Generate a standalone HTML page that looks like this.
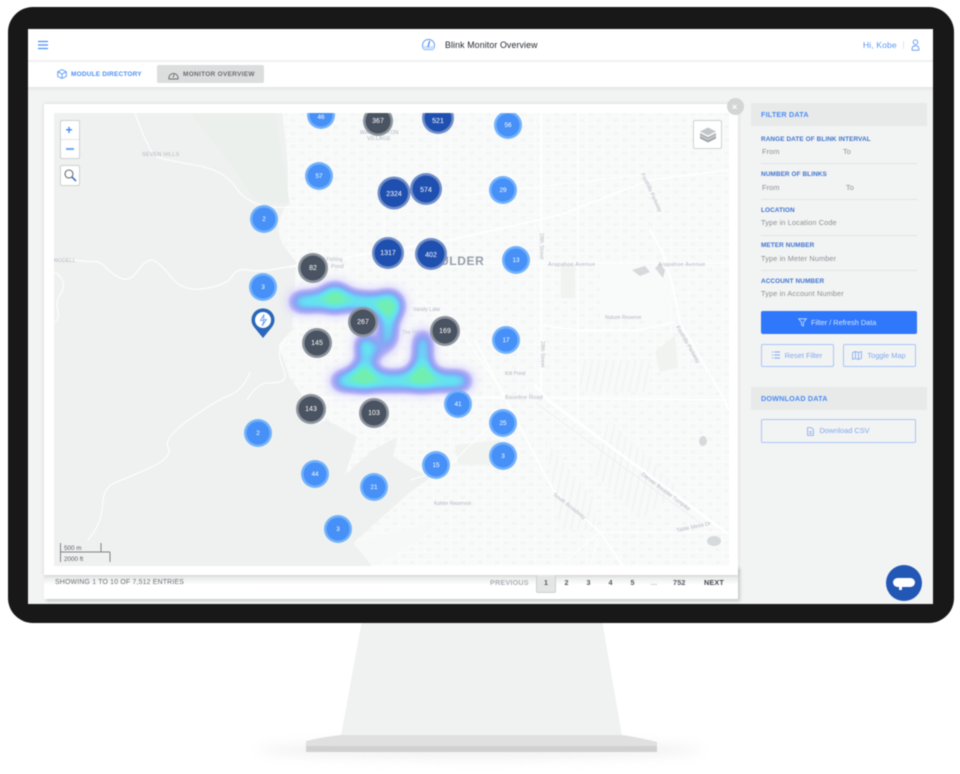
<!DOCTYPE html>
<html lang="en"><head><meta charset="utf-8"><title>Blink Monitor Overview</title>
<style>
html,body{margin:0;padding:0;background:#fff}
body{width:960px;height:774px;position:relative;overflow:hidden;font-family:"Liberation Sans",sans-serif}
.a,.t{position:absolute}
.t{white-space:nowrap;line-height:10px}
#wrap{position:absolute;left:0;top:0;width:960px;height:774px;filter:blur(.45px)}
.lab{font-size:6.4px;font-weight:700;color:#3f74cf;letter-spacing:.1px}
.ph{font-size:7.3px;color:#8b8f93;letter-spacing:.15px}
.div{position:absolute;left:761px;width:156px;height:1px;background:#e2e3e3}
.hd{position:absolute;left:751px;width:176px;height:23px;background:#e8e9e9}
.hd span{position:absolute;left:10px;top:6px;font-size:7.2px;line-height:11px;font-weight:700;color:#4a8df5;letter-spacing:.2px}
.btn{position:absolute;box-sizing:border-box;border:1px solid #a9c6f8;border-radius:2px;color:#80a9ef;font-size:7.4px;text-align:center;line-height:21px}
.pg{font-size:7.2px;font-weight:700;color:#55595f;top:578px;letter-spacing:.2px}
svg text{font-family:"Liberation Sans",sans-serif}
</style></head><body>
<div id="wrap">
<!-- stand -->
<div class="a" style="left:258px;top:742px;width:445px;height:16px;border-radius:50%;background:#e6e6e6;filter:blur(6px);opacity:.6"></div>
<svg class="a" style="left:0;top:0" width="960" height="774" viewBox="0 0 960 774">
<path d="M362,620H602L622,736H341Z" fill="#f0f1f1"/>
<path d="M306,741Q322,737 341,735H622Q642,738 657,742V752H306Z" fill="#e0e0e0"/>
<rect x="306" y="746" width="351" height="6" fill="#d1d1d1"/>
</svg>
<!-- bezel -->
<div class="a" style="left:8px;top:7px;width:946px;height:616px;border-radius:25px;background:#181818"></div>
<!-- screen -->
<div class="a" style="left:28px;top:29px;width:905px;height:575px;background:#f2f3f3;overflow:hidden;border-bottom:0">
<div class="a" style="left:0;top:0;width:905px;height:31px;background:#fff"></div>
<div class="a" style="left:0;top:31px;width:905px;height:2px;background:#f0f1f1"></div>
<div class="a" style="left:0;top:33px;width:905px;height:25px;background:#fff"></div>
<div class="a" style="left:0;top:58px;width:905px;height:4px;background:linear-gradient(#e4e5e5,#f2f3f3)"></div>
</div>
<!-- header -->
<svg class="a" style="left:38px;top:40px" width="10" height="10" viewBox="0 0 10 10"><path d="M0,1.5H10M0,5H10M0,8.5H10" stroke="#4a90f5" stroke-width="1.3"/></svg>
<svg class="a" style="left:421px;top:37px" width="15" height="14" viewBox="0 0 15 14"><path d="M3.2,12.6A6,6 0 1 1 11.8,12.6Z" fill="#fff" stroke="#6aa4f8" stroke-width="1.1"/><path d="M2.5,12.6H12.5L13.2,9H1.8Z" fill="#cfe1fd"/><path d="M7,10L8.6,4" stroke="#3f7fe8" stroke-width="1.2"/></svg>
<div class="t" style="left:445px;top:40px;font-size:8.8px;color:#24282e;letter-spacing:.12px">Blink Monitor Overview</div>
<div class="t" style="left:863px;top:40px;font-size:8.6px;color:#5b97f6;letter-spacing:.1px">Hi, Kobe</div>
<div class="a" style="left:903px;top:41px;width:1px;height:8px;background:#e3e6ea"></div>
<svg class="a" style="left:911px;top:39px" width="9" height="12" viewBox="0 0 9 12"><circle cx="4.5" cy="3.2" r="2.3" fill="none" stroke="#6fa3f6"/><path d="M1,10.5Q1,6.8 4.5,6.8T8,10.5Q8,11.3 7,11.3H2Q1,11.3 1,10.5Z" fill="none" stroke="#6fa3f6"/></svg>
<!-- nav -->
<svg class="a" style="left:57px;top:69px" width="10" height="10" viewBox="0 0 10 10"><path d="M5,.6L9.3,2.8V7.4L5,9.5L.7,7.4V2.8ZM.7,2.8L5,5L9.3,2.8M5,5V9.5" fill="none" stroke="#5b9bf7" stroke-width=".9"/></svg>
<div class="t" style="left:71px;top:69.5px;font-size:6.5px;font-weight:700;color:#4a90f5;letter-spacing:.18px">MODULE DIRECTORY</div>
<div class="a" style="left:157px;top:65px;width:107px;height:18px;background:#dcdddd;border-radius:2px"></div>
<svg class="a" style="left:168px;top:70px" width="11" height="10" viewBox="0 0 11 10"><path d="M1,9A4.6,4.6 0 1 1 10,9Z" fill="none" stroke="#6a6e73" stroke-width=".9"/><path d="M5,7.5L6.5,3.5" stroke="#6a6e73"/></svg>
<div class="t" style="left:183px;top:69.5px;font-size:6.5px;font-weight:700;color:#6a6e73;letter-spacing:.28px">MONITOR OVERVIEW</div>
<!-- card -->
<div class="a" style="left:44px;top:566px;width:694px;height:33px;background:#fff;box-shadow:2px 2px 3px rgba(0,0,0,.18)"></div>
<div class="a" style="left:44px;top:575px;width:694px;height:10px;background:linear-gradient(#e4e5e5,#fff)"></div>
<div class="a" style="left:44px;top:104px;width:694px;height:471px;background:#fff;box-shadow:0 0 4px rgba(0,0,0,.12)"></div>
<!-- map -->
<svg class="a" style="left:54px;top:113px" width="675" height="453" viewBox="54 113 675 453">
<defs>
<pattern id="blk" width="17" height="13" patternUnits="userSpaceOnUse"><rect width="17" height="13" fill="#f8f9f9"/><path d="M0,0H17M0,6.5H17M0,0V13M8.5,0V13" stroke="#fcfcfc" stroke-width="1"/><rect x="2" y="2" width="4" height="3" fill="#f4f5f5"/><rect x="11" y="8.5" width="4" height="3" fill="#f4f5f5"/></pattern>
<pattern id="blk2" width="7" height="40" patternUnits="userSpaceOnUse" patternTransform="rotate(12)"><rect width="7" height="40" fill="#f8f9f9"/><path d="M3.5,0V40" stroke="#f2f3f3" stroke-width="1.4"/></pattern>
<filter id="heat" filterUnits="userSpaceOnUse" x="240" y="250" width="280" height="180" color-interpolation-filters="sRGB">
<feGaussianBlur in="SourceAlpha" stdDeviation="7"/>
<feColorMatrix type="matrix" values="0 0 0 1 0  0 0 0 1 0  0 0 0 1 0  0 0 0 1 0"/>
<feComponentTransfer>
<feFuncR type="table" tableValues=".86 .86 .73 .62 .52 .44 .40 .41 .44 .45 .45"/>
<feFuncG type="table" tableValues=".85 .85 .72 .64 .66 .78 .88 .91 .94 .94 .94"/>
<feFuncB type="table" tableValues=".99 .99 .97 .96 .96 .96 .96 .85 .71 .68 .68"/>
<feFuncA type="table" tableValues="0 .55 1 1 1 1 1 1 1 1 1"/>
</feComponentTransfer>
</filter>
</defs>
<rect x="54" y="113" width="675" height="453" fill="#f8f9f9"/>
<rect x="285" y="113" width="444" height="453" fill="url(#blk)"/>
<path d="M580,360H650V392H580Z M610,420L680,490L640,520L590,470Z M545,440L595,500V530H560Z" fill="url(#blk2)"/>
<rect x="600" y="265" width="70" height="55" fill="#f9fafa"/>
<path d="M54,113H282Q290,170 287,205Q272,225 283,245L296,262L292,330L278,345L290,378L300,392L315,425L327,420L357,437L345,475L373,450L397,437L393,457L430,478L410,492L353,543L372,566H54Z" fill="#eef1ef"/>
<path d="M190,113H275L290,205L255,200L235,170Z" fill="#ecf0ed"/>
<path d="M353,543L440,520L418,540L372,566Z" fill="#f7f8f8"/>
<path d="M455,445L500,440L490,465H458Z" fill="#f0f3f0"/>
<path d="M561,265H575V298H561Z" fill="#f0f3f0"/>
<path d="M655,352L675,335L678,368L660,372Z" fill="#f1f3f1"/>
<g fill="none" stroke="#fcfdfd" stroke-linecap="round" stroke-linejoin="round">
<path stroke-width="1.3" d="M135,113Q150,155 157,157Q165,160 195,165Q225,170 237,189Q250,208 285,207.5L320,207"/>
<path stroke-width="1.4" d="M54,258Q87,262 93.5,261.5Q100,261 106.5,268Q113,275 121.5,278.5Q130,282 138.5,270Q147,258 153.5,260.5Q160,263 171.5,277.5Q183,292 205,288.5Q227,285 232,276.5Q237,268 247,270Q257,272 273,269.5L315,262"/>
<path stroke-width="1.3" d="M55,272Q68,282 61.5,292Q55,302 57.5,309.5Q60,317 55,322"/>
<path stroke-width="1.3" d="M88,540Q102,523 102.5,505Q103,487 116.5,482Q130,477 151.5,467Q173,457 168,447.5Q163,438 190,419Q217,400 230,395Q243,390 250,372M247,400Q257,383 268,383Q280,383 283.5,380Q287,377 282,365Q277,353 282,345L287,337"/>
</g>
<g fill="none" stroke="#fff" stroke-linecap="round" stroke-linejoin="round">
<path stroke-width="2.2" d="M541,113V393"/>
<path stroke-width="1.6" d="M290,267L450,240L560,215L650,180L729,170"/>
<path stroke-width="1.6" d="M440,263H729"/>
<path stroke-width="1.5" d="M541,325L575,330H640L675,322"/>
<path stroke-width="1.8" d="M650,230L663,253L673,287L680,323L723,397L729,410"/>
<path stroke-width="1.6" d="M300,398L520,398L729,400"/>
<path stroke-width="2.6" d="M535,385L548,400L727,533"/>
<path stroke-width=".8" stroke="#eceeee" d="M536,403L700,523"/>
<path stroke-width="1.8" d="M475,340L520,427L553,490L600,532L623,566"/>
<path stroke-width="1.3" d="M600,532H729"/>
<path stroke-width="1.3" d="M578,113V423"/>
<path stroke-width="1" d="M440,113V250M386,113L384,260"/>
<path stroke-width="1" d="M420,300L460,330L505,395M465,195L640,175M590,566L600,532L560,566M410,480L445,470L490,425"/>
</g>
<g fill="#d6dadd"><path d="M632,270L645,266L650,272L640,276ZM655,268L660,264L665,270L663,278Z"/><ellipse cx="714" cy="541" rx="7" ry="5"/><ellipse cx="703" cy="441" rx="4" ry="5"/></g>
<g fill="#b0b7c0" font-size="5.4">
<text x="142" y="156" letter-spacing=".25">SEVEN HILLS</text>
<text x="360" y="134" letter-spacing=".2">WASHINGTON</text><text x="367" y="140" letter-spacing=".2">VILLAGE</text>
<text x="54" y="262">RODELL</text>
<text x="315" y="261" font-size="5">East Fishing</text><text x="331" y="268">Pond</text>
<text x="413" y="311" font-size="5">Varsity Lake</text>
<text x="402" y="334" font-size="5">The Hill</text>
<text x="505" y="375" font-size="5">Kitt Pond</text>
<text x="505" y="399" font-size="5.8">Baseline Road</text>
<text x="434" y="505" font-size="5">Kohler Reservoir</text>
<text x="548" y="266" font-size="5.6" letter-spacing=".2">Arapahoe Avenue</text>
<text x="658" y="266" font-size="5.6" letter-spacing=".2">Arapahoe Avenue</text>
<text x="605" y="319" font-size="5.2">Nature Reserve</text>
<text transform="translate(540,233) rotate(90)">28th Street</text>
<text transform="translate(541,341) rotate(90)">28th Street</text>
<text transform="translate(676,327) rotate(60)">Foothills Parkway</text>
<text transform="translate(641,174) rotate(65)">Foothills Parkway</text>
<text transform="translate(641,475) rotate(37)">Denver Boulder Turnpike</text>
<text transform="translate(553,495) rotate(38)">South Broadway</text>
<text x="677" y="532" transform="rotate(-12 677 532)">Table Mesa Dr</text>
</g>
<text x="440" y="265" font-size="12" font-weight="700" fill="#979fab" letter-spacing=".6">ULDER</text>
<!-- heat -->
<g filter="url(#heat)" fill="#000" stroke="#000" stroke-linecap="round" stroke-linejoin="round">
<path fill="none" stroke-width="12" d="M298,302L320,301L335,298L350,301L388,304"/>
<path fill="none" stroke-width="10" d="M388,304V340"/>
<path fill="none" stroke-width="4" d="M388,342Q385,352 372,354"/>
<path fill="none" stroke-width="7" d="M366,350L364,372"/>
<ellipse cx="366" cy="346" rx="7" ry="10" stroke="none"/>
<path fill="none" stroke-width="12" d="M340,381H463"/>
<path fill="none" stroke-width="10" d="M423,338L422,378"/>
<ellipse cx="335" cy="298" rx="13" ry="12" stroke="none"/>
<ellipse cx="389" cy="306" rx="12" ry="13" stroke="none"/>
<ellipse cx="364" cy="377" rx="14" ry="12" stroke="none"/>
<ellipse cx="422" cy="377" rx="14" ry="12" stroke="none"/>
</g>
<!-- markers -->
<g text-anchor="middle" font-size="6.4" fill="#fff">
<g id="l">
<g fill="#72b2fc"><circle cx="321" cy="115" r="14"/><circle cx="319" cy="176" r="14"/><circle cx="264" cy="219" r="14"/><circle cx="263" cy="287" r="14"/><circle cx="508" cy="125" r="14"/><circle cx="503" cy="190" r="14"/><circle cx="516" cy="260" r="14"/><circle cx="506" cy="340" r="14"/><circle cx="458" cy="404" r="14"/><circle cx="503" cy="423" r="14"/><circle cx="503" cy="456" r="14"/><circle cx="436" cy="465" r="14"/><circle cx="315" cy="474" r="14"/><circle cx="374" cy="487" r="14"/><circle cx="338" cy="529" r="14"/><circle cx="258" cy="433" r="14"/></g>
<g fill="#4690f7"><circle cx="321" cy="115" r="11.5"/><circle cx="319" cy="176" r="11.5"/><circle cx="264" cy="219" r="11.5"/><circle cx="263" cy="287" r="11.5"/><circle cx="508" cy="125" r="11.5"/><circle cx="503" cy="190" r="11.5"/><circle cx="516" cy="260" r="11.5"/><circle cx="506" cy="340" r="11.5"/><circle cx="458" cy="404" r="11.5"/><circle cx="503" cy="423" r="11.5"/><circle cx="503" cy="456" r="11.5"/><circle cx="436" cy="465" r="11.5"/><circle cx="315" cy="474" r="11.5"/><circle cx="374" cy="487" r="11.5"/><circle cx="338" cy="529" r="11.5"/><circle cx="258" cy="433" r="11.5"/></g>
</g>
<g fill="#6f8dc7"><circle cx="438" cy="118" r="16"/><circle cx="394" cy="193" r="16.5"/><circle cx="426" cy="189" r="16"/><circle cx="388" cy="253" r="16"/><circle cx="431" cy="254" r="16"/></g>
<g fill="#1f50b0"><circle cx="438" cy="118" r="13.5"/><circle cx="394" cy="193" r="14"/><circle cx="426" cy="189" r="13.5"/><circle cx="388" cy="253" r="13.5"/><circle cx="431" cy="254" r="13.5"/></g>
<g fill="#8c939c"><circle cx="378" cy="121" r="15"/><circle cx="313" cy="268" r="15"/><circle cx="363" cy="322" r="15"/><circle cx="317" cy="343" r="15"/><circle cx="445" cy="331" r="15"/><circle cx="311" cy="409" r="15"/><circle cx="374" cy="413" r="15"/></g>
<g fill="#4a5361"><circle cx="378" cy="121" r="12.5"/><circle cx="313" cy="268" r="12.5"/><circle cx="363" cy="322" r="12.5"/><circle cx="317" cy="343" r="12.5"/><circle cx="445" cy="331" r="12.5"/><circle cx="311" cy="409" r="12.5"/><circle cx="374" cy="413" r="12.5"/></g>
<text x="321" y="119">46</text><text x="319" y="178">57</text><text x="264" y="221">2</text><text x="263" y="289">3</text><text x="508" y="127">56</text><text x="503" y="192">29</text><text x="516" y="262">13</text><text x="506" y="342">17</text><text x="458" y="406">41</text><text x="503" y="425">25</text><text x="503" y="458">3</text><text x="436" y="467">15</text><text x="315" y="476">44</text><text x="374" y="489">21</text><text x="338" y="531">3</text><text x="258" y="435">2</text>
<text x="438" y="123" font-size="7">521</text><text x="394" y="196" font-size="7">2324</text><text x="426" y="192" font-size="7">574</text><text x="388" y="255" font-size="7">1317</text><text x="431" y="257" font-size="7">402</text>
<text x="378" y="123" font-size="7">367</text><text x="313" y="270" font-size="7">82</text><text x="363" y="324" font-size="7">267</text><text x="317" y="345" font-size="7">145</text><text x="445" y="333" font-size="7">169</text><text x="311" y="411" font-size="7">143</text><text x="374" y="415" font-size="7">103</text>
</g>
<!-- pin -->
<path d="M263,338L254,327A11.5,11.5 0 1 1 272,327Z" fill="#2b66bb"/>
<circle cx="263" cy="320" r="8" fill="#fff"/>
<path d="M264,314.5L260.5,320.5H264L262,326L266.5,319.5H263.5Z" fill="none" stroke="#5b97f0" stroke-width=".8"/>
<!-- scale -->
<path d="M60.5,543V552H101V543M60.5,552V562M110,552V562M60.5,552H110" fill="none" stroke="#7c8187" stroke-width="1"/>
<text x="64" y="550" font-size="6.3" fill="#5d6166">500 m</text>
<text x="64" y="561" font-size="6.3" fill="#5d6166">2000 ft</text>
</svg>
<!-- map controls -->
<div class="a" style="left:60px;top:120px;width:20px;height:39px;box-sizing:border-box;background:#fff;border:1px solid #cfd1d1;border-radius:2px"></div>
<div class="a" style="left:61px;top:139px;width:18px;height:1px;background:#e6e6e6"></div>
<div class="t" style="left:65.5px;top:124px;font-size:12px;font-weight:700;color:#3f8af5;line-height:12px">+</div>
<div class="a" style="left:66px;top:148px;width:8px;height:1.6px;background:#6fa6f6"></div>
<div class="a" style="left:60px;top:165px;width:20px;height:21px;box-sizing:border-box;background:#fff;border:1px solid #cfd1d1;border-radius:2px"></div>
<svg class="a" style="left:63px;top:168px" width="15" height="15" viewBox="0 0 15 15"><circle cx="6" cy="6" r="4" fill="#fff" stroke="#666b70" stroke-width="1.1"/><path d="M9,9L13,13" stroke="#3f74cf" stroke-width="1.6"/></svg>
<div class="a" style="left:693px;top:120px;width:29px;height:29px;box-sizing:border-box;background:#fff;border:1px solid #cfd1d1;border-radius:2px"></div>
<svg class="a" style="left:699px;top:127px" width="18" height="16" viewBox="0 0 18 16"><path d="M1,9L9,13L17,9V11.5L9,15.5L1,11.5Z" fill="#a0a5aa"/><path d="M1,6L9,10L17,6V8.5L9,12.5L1,8.5Z" fill="#adb2b6"/><path d="M1,4.5L9,.5L17,4.5L9,8.5Z" fill="#c2c6c9"/></svg>
<div class="a" style="left:727px;top:98px;width:17px;height:17px;border-radius:50%;background:#d4d5d5"></div>
<div class="t" style="left:732px;top:102px;font-size:9px;color:#fff;font-weight:700">×</div>
<!-- pagination -->
<div class="t" style="left:55px;top:578px;font-size:6.9px;color:#6b6f75;letter-spacing:.2px">SHOWING 1 TO 10 OF 7,512 ENTRIES</div>
<div class="a" style="left:536px;top:575px;width:20px;height:18px;box-sizing:border-box;background:#e4e5e5;border:1px solid #cfd0d0;border-top:0;border-radius:0 0 2px 2px"></div>
<div class="t pg" style="left:490px;color:#adb0b4">PREVIOUS</div>
<div class="t pg" style="left:544px">1</div><div class="t pg" style="left:564.5px">2</div><div class="t pg" style="left:586.5px">3</div><div class="t pg" style="left:608.5px">4</div><div class="t pg" style="left:630.5px">5</div><div class="t pg" style="left:650.5px;color:#b0b3b6">...</div><div class="t pg" style="left:673px">752</div><div class="t pg" style="left:704px;color:#43474d">NEXT</div>
<!-- sidebar -->
<div class="hd" style="top:103px"><span>FILTER DATA</span></div>
<div class="t lab" style="left:761px;top:134.5px">RANGE DATE OF BLINK INTERVAL</div>
<div class="t ph" style="left:762px;top:147px">From</div><div class="t ph" style="left:843px;top:147px">To</div>
<div class="div" style="top:163px"></div>
<div class="t lab" style="left:761px;top:169.5px">NUMBER OF BLINKS</div>
<div class="t ph" style="left:762px;top:183px">From</div><div class="t ph" style="left:846px;top:183px">To</div>
<div class="div" style="top:199px"></div>
<div class="t lab" style="left:761px;top:205.5px">LOCATION</div>
<div class="t ph" style="left:761px;top:218px">Type in Location Code</div>
<div class="div" style="top:235px"></div>
<div class="t lab" style="left:761px;top:240.5px">METER NUMBER</div>
<div class="t ph" style="left:761px;top:254px">Type in Meter Number</div>
<div class="div" style="top:270px"></div>
<div class="t lab" style="left:761px;top:276.5px">ACCOUNT NUMBER</div>
<div class="t ph" style="left:761px;top:289px">Type in Account Number</div>
<div class="a" style="left:761px;top:311px;width:156px;height:23px;background:#2f78fb;border-radius:2px"></div>
<svg class="a" style="left:798px;top:318px" width="9" height="9" viewBox="0 0 9 9"><path d="M.7,.8H8.3L5.4,4.4V8L3.6,7V4.4Z" fill="none" stroke="#cfe0fe" stroke-width=".8"/></svg>
<div class="t" style="left:811px;top:318px;font-size:7.3px;color:#d6e4fe">Filter / Refresh Data</div>
<div class="btn" style="left:761px;top:344px;width:73px;height:23px;padding-left:12px">Reset Filter</div>
<svg class="a" style="left:772px;top:351px" width="8" height="8" viewBox="0 0 8 8"><path d="M2.2,1H8M2.2,4H8M2.2,7H8M0,1H1M0,4H1M0,7H1" stroke="#80a9ef" stroke-width=".9"/></svg>
<div class="btn" style="left:843px;top:344px;width:73px;height:23px;padding-left:14px">Toggle Map</div>
<svg class="a" style="left:852px;top:351px" width="10" height="9" viewBox="0 0 10 9"><path d="M.6,1.5L3.4,.6L6.6,1.5L9.4,.6V7.5L6.6,8.4L3.4,7.5L.6,8.4ZM3.4,.6V7.5M6.6,1.5V8.4" fill="none" stroke="#80a9ef" stroke-width=".8"/></svg>
<div class="hd" style="top:387px"><span>DOWNLOAD DATA</span></div>
<div class="btn" style="left:761px;top:419px;width:155px;height:24px;padding-left:12px;line-height:22px">Download CSV</div>
<svg class="a" style="left:807px;top:427px" width="7" height="9" viewBox="0 0 7 9"><path d="M.6,.6H4.4L6.4,2.6V8.4H.6ZM2,4.5H5M2,6.3H5" fill="none" stroke="#80a9ef" stroke-width=".8"/></svg>
<!-- chat -->
<div class="a" style="left:886px;top:565px;width:36px;height:36px;border-radius:50%;background:#2257b5"></div>
<div class="a" style="left:893px;top:578px;width:22px;height:9px;border-radius:5px;background:#fff"></div>
<div class="a" style="left:899px;top:587px;width:3px;height:3px;background:#fff"></div>
</div>
</body></html>
